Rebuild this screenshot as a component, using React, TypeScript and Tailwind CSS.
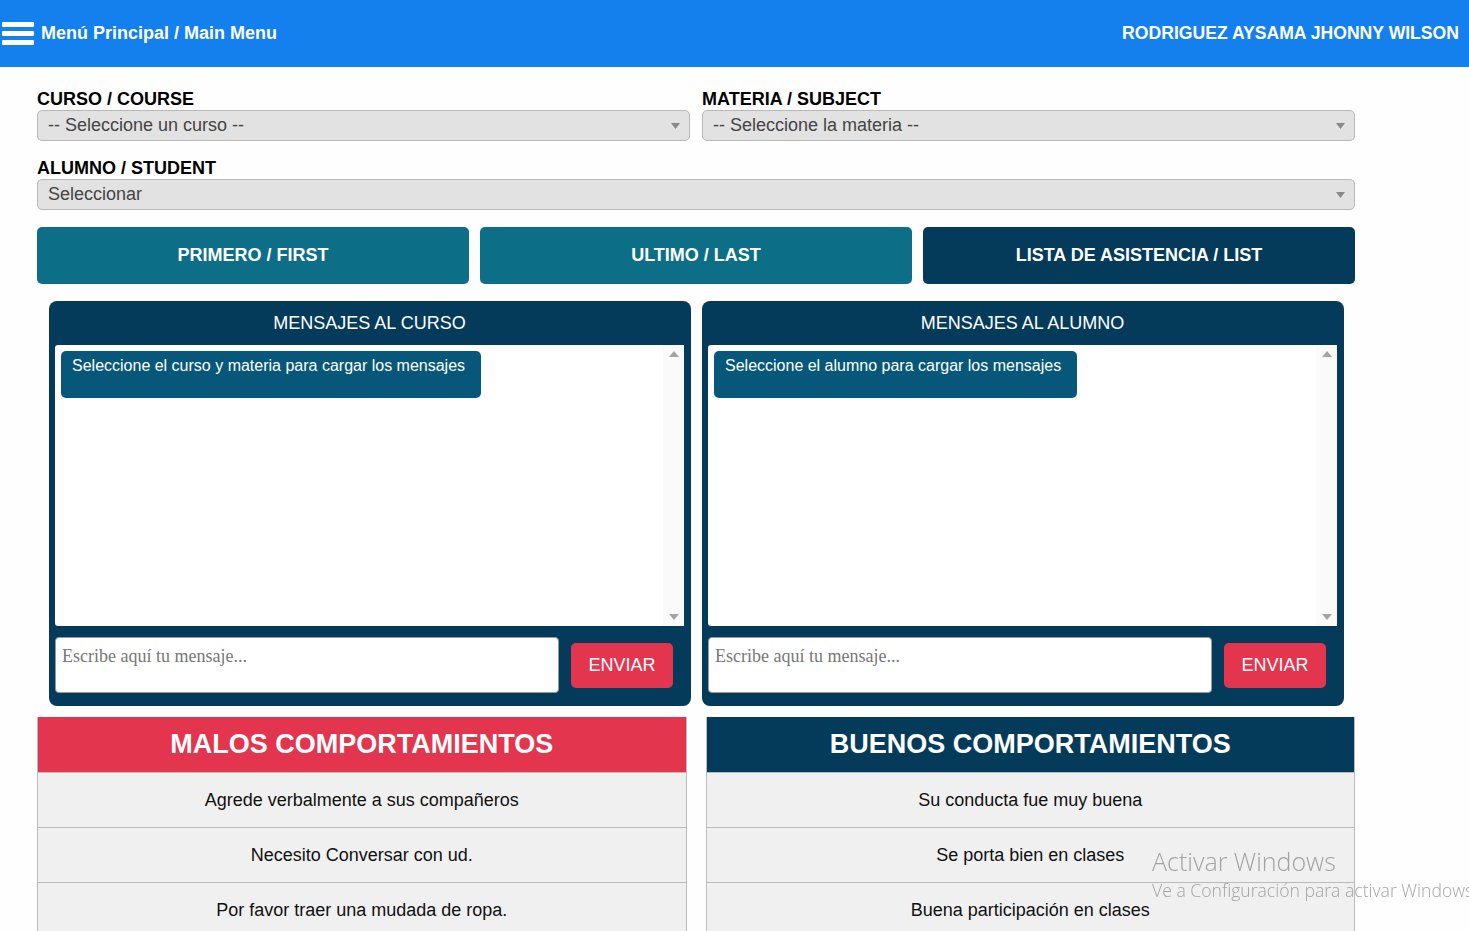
import { useState } from "react";

const malos = [
  "Agrede verbalmente a sus compañeros",
  "Necesito Conversar con ud.",
  "Por favor traer una mudada de ropa.",
  "No cumple con las tareas",
];

const buenos = [
  "Su conducta fue muy buena",
  "Se porta bien en clases",
  "Buena participación en clases",
  "Cumple con sus tareas",
];

function Caret() {
  return (
    <svg width="9" height="6" viewBox="0 0 9 6" className="shrink-0">
      <path d="M0 0h9L4.5 6z" fill="#888" />
    </svg>
  );
}

function Select({ value }: { value: string }) {
  return (
    <div className="flex h-[31px] items-center justify-between rounded-[5px] border border-[#b8b8b8] bg-[#e2e2e2] pl-[10px] pr-[9px] text-[18px] text-[#444]">
      <span>{value}</span>
      <Caret />
    </div>
  );
}

function Panel({ title, hint }: { title: string; hint: string }) {
  const [msg, setMsg] = useState("");
  return (
    <div className="flex h-[405px] flex-col rounded-[8px] bg-[#043b5a] pb-[13px] pl-[6px] pr-[7px]">
      <div className="flex h-[44px] items-center justify-center text-[18px] text-white">{title}</div>
      <div className="flex h-[281px] rounded-[3px] bg-white">
        <div className="flex-1 p-[6px]">
          <div className="h-[47px] w-fit rounded-[5px] bg-[#07577a] pl-[11px] pr-[16px] pt-[3px] text-[16px] text-white">
            {hint}
          </div>
        </div>
        <div className="flex w-[21px] flex-col items-center justify-between bg-[#fafafa] py-[6px]">
          <svg width="10" height="6" viewBox="0 0 10 6">
            <path d="M5 0l5 6H0z" fill="#a3a3a3" />
          </svg>
          <svg width="10" height="6" viewBox="0 0 10 6">
            <path d="M0 0h10L5 6z" fill="#a3a3a3" />
          </svg>
        </div>
      </div>
      <div className="mt-[11px] flex items-center gap-[12px] pr-[11px]">
        <textarea
          value={msg}
          onChange={(e) => setMsg(e.target.value)}
          placeholder="Escribe aquí tu mensaje..."
          className="h-[56px] flex-1 resize-none rounded-[4px] border border-[#999] bg-white px-[6px] py-[5px] text-[18px] text-[#333] placeholder:text-[#777] outline-none"
          style={{ fontFamily: '"Liberation Serif", serif' }}
        />
        <button className="h-[45px] w-[102px] rounded-[5px] bg-[#e3354e] text-[18px] text-white">ENVIAR</button>
      </div>
    </div>
  );
}

function Behaviours({ title, color, items }: { title: string; color: string; items: string[] }) {
  return (
    <div className="border-x border-[#bbb]">
      <div className={`flex h-[55px] items-center justify-center text-[27px] font-bold text-white ${color}`}>
        {title}
      </div>
      {items.map((t) => (
        <div
          key={t}
          className="flex h-[55px] items-center justify-center border-t border-[#bbb] bg-[#f0f0f0] text-[18px] text-[#111]"
        >
          {t}
        </div>
      ))}
    </div>
  );
}

export default function App() {
  return (
    <div className="min-h-screen bg-[#fefefe]" style={{ fontFamily: '"Liberation Sans", Arial, sans-serif' }}>
      <header className="flex h-[67px] items-center justify-between bg-[#1380ed] pl-[2px] pr-[10px] text-white">
        <div className="flex items-center gap-[7px]">
          <svg width="32" height="23" viewBox="0 0 32 23">
            <rect x="0" y="0" width="32" height="5" rx="1" fill="#fff" />
            <rect x="0" y="9" width="32" height="5" rx="1" fill="#fff" />
            <rect x="0" y="18" width="32" height="5" rx="1" fill="#fff" />
          </svg>
          <span className="text-[18px] font-bold">Menú Principal / Main Menu</span>
        </div>
        <span className="text-[17.6px] font-bold">RODRIGUEZ AYSAMA JHONNY WILSON</span>
      </header>

      <main className="ml-[37px] w-[1318px] pt-[21px]">
        <div className="grid grid-cols-2 gap-x-[12px]">
          <div>
            <div className="text-[18px] font-bold leading-[22px] text-black">CURSO / COURSE</div>
            <Select value="-- Seleccione un curso --" />
          </div>
          <div>
            <div className="text-[18px] font-bold leading-[22px] text-black">MATERIA / SUBJECT</div>
            <Select value="-- Seleccione la materia --" />
          </div>
        </div>

        <div className="mt-[16px]">
          <div className="text-[18px] font-bold leading-[22px] text-black">ALUMNO / STUDENT</div>
          <Select value="Seleccionar" />
        </div>

        <div className="mt-[17px] grid grid-cols-3 gap-[11px]">
          <button className="h-[57px] rounded-[5px] bg-[#0d6e87] text-[18px] font-bold text-white">PRIMERO / FIRST</button>
          <button className="h-[57px] rounded-[5px] bg-[#0d6e87] text-[18px] font-bold text-white">ULTIMO / LAST</button>
          <button className="h-[57px] rounded-[5px] bg-[#043b5a] text-[18px] font-bold text-white">
            LISTA DE ASISTENCIA / LIST
          </button>
        </div>

        <div className="mt-[17px] grid grid-cols-2 gap-[11px] pl-[12px] pr-[11px]">
          <Panel title="MENSAJES AL CURSO" hint="Seleccione el curso y materia para cargar los mensajes" />
          <Panel title="MENSAJES AL ALUMNO" hint="Seleccione el alumno para cargar los mensajes" />
        </div>

        <div className="mt-[11px] grid grid-cols-2 gap-[19px]">
          <Behaviours title="MALOS COMPORTAMIENTOS" color="bg-[#e3354e]" items={malos} />
          <Behaviours title="BUENOS COMPORTAMIENTOS" color="bg-[#043b5a]" items={buenos} />
        </div>
      </main>

      {/* activation watermark over the page */}
      <div
        className="pointer-events-none fixed left-[1152px] top-[845px] whitespace-nowrap text-[#9a9a9a]/90"
        style={{ fontFamily: '"Open Sans", sans-serif' }}
      >
        <div className="text-[25px] font-light leading-[32px]">Activar Windows</div>
        <div className="mt-[1px] text-[17.6px] font-light leading-[24px]">Ve a Configuración para activar Windows</div>
      </div>
    </div>
  );
}
